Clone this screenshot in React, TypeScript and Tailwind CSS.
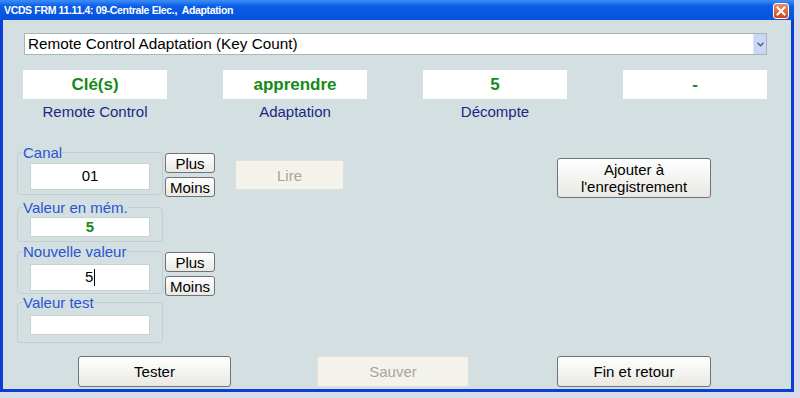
import React from "react";

const font = "font-['Liberation_Sans',Arial,sans-serif]";
const btn =
  "flex items-center justify-center border border-[#6f7277] rounded-[3px] bg-gradient-to-b from-white to-[#e9e8e2] text-[15px] text-black leading-[17px] text-center";
const dis =
  "flex items-center justify-center border border-[#e2e0d6] rounded-[2px] bg-[#f4f3eb] text-[15px] text-[#a6a59e] leading-none";
const legend = "ml-[5px] px-0 text-[15px] leading-[15px] text-[#2a55d2]";
const frame = "border border-[#c2cfd1] rounded-[4px] p-0 m-0 min-w-0";
const input =
  "ml-[12px] w-[120px] bg-white border border-[#c9d2d3] flex items-center justify-center text-[15px]";

const boxes = [
  { v: "Clé(s)", l: "Remote Control" },
  { v: "apprendre", l: "Adaptation" },
  { v: "5", l: "Décompte" },
  { v: "-", l: "" },
];

export default function App() {
  return (
    <div className={`w-[800px] h-[398px] bg-[#d9dbe9] ${font}`}>
      <div className="w-[794px] h-[392px] flex flex-col bg-[#0a3fd6]">
        {/* title bar */}
        <div className="h-[20px] flex items-center justify-between pl-[4px] pr-[5px] bg-gradient-to-b from-[#3f8ef5] via-[#0a5ee8] via-30% to-[#0650dd]">
          <span className="text-white font-bold text-[10.5px] leading-none tracking-[-0.35px] pt-[1px]">
            VCDS FRM 11.11.4: 09-Centrale Elec.,&nbsp; Adaptation
          </span>
          <div className="w-[16px] h-[16px] mt-[2px] rounded-[3px] border border-white bg-gradient-to-b from-[#ee8a68] to-[#cf4318] flex items-center justify-center">
            <svg width="10" height="10" viewBox="0 0 10 10">
              <path d="M1.5 1.5 L8.5 8.5 M8.5 1.5 L1.5 8.5" stroke="white" strokeWidth="2" strokeLinecap="square" />
            </svg>
          </div>
        </div>

        {/* body */}
        <div className="flex-1 mx-[3px] mb-[3px] bg-[#d3dfe0] flex flex-col">
          {/* dropdown */}
          <div className="mt-[13px] ml-[21px] w-[743px] h-[22px] bg-white border border-[#a9b6bc] flex items-center justify-between">
            <span className="pl-[3px] text-[15.3px] text-black leading-none">
              Remote Control Adaptation (Key Count)
            </span>
            <div className="w-[13px] h-[20px] bg-[#c9d7f3] border-l border-[#dbe4f7] flex items-center justify-center">
              <svg width="7" height="5" viewBox="0 0 7 5">
                <path d="M0.5 0.8 L3.5 3.8 L6.5 0.8" fill="none" stroke="#4a5f8c" strokeWidth="1.4" />
              </svg>
            </div>
          </div>

          {/* value boxes */}
          <div className="mt-[15px] ml-[20px] flex gap-[56px]">
            {boxes.map((b, i) => (
              <div key={i} className="w-[144px] flex flex-col items-center">
                <div className="w-[144px] h-[29px] bg-white flex items-center justify-center text-[17px] font-bold text-[#168a16]">
                  {b.v}
                </div>
                <div className="mt-[4px] h-[17px] text-[15px] leading-[17px] text-[#1c2785]">{b.l}</div>
              </div>
            ))}
          </div>

          {/* middle */}
          <div className="mt-[25px] ml-[14px] flex items-start">
            <div className="w-[146px] flex flex-col">
              <fieldset className={frame}>
                <legend className={legend}>Canal</legend>
                <div className={`${input} mt-[3px] h-[27px] text-black`}>01</div>
                <div className="h-[4px]" />
              </fieldset>
              <fieldset className={`${frame} mt-[5px]`}>
                <legend className={legend}>Valeur en mém.</legend>
                <div className={`${input} mt-[2px] h-[20px] font-bold text-[#168a16]`}>5</div>
                <div className="h-[4px]" />
              </fieldset>
              <fieldset className={`${frame} mt-[2px]`}>
                <legend className={legend}>Nouvelle valeur</legend>
                <div className={`${input} mt-[5px] h-[27px] text-black`}>
                  <span>5</span>
                  <span className="w-px h-[17px] bg-black ml-[0.5px]" />
                </div>
                <div className="h-[2px]" />
              </fieldset>
              <fieldset className={`${frame} mt-[1px]`}>
                <legend className={legend}>Valeur test</legend>
                <div className={`${input} mt-[5px] h-[20px]`} />
                <div className="h-[7px]" />
              </fieldset>
            </div>

            <div className="ml-[2px] w-[50px] flex flex-col">
              <div className={`${btn} mt-[8px] h-[20px]`}>Plus</div>
              <div className={`${btn} mt-[4px] h-[20px]`}>Moins</div>
              <div className={`${btn} mt-[55px] h-[20px]`}>Plus</div>
              <div className={`${btn} mt-[4px] h-[20px]`}>Moins</div>
            </div>

            <div className={`${dis} ml-[20px] mt-[15px] w-[109px] h-[30px]`}>Lire</div>

            <div className={`${btn} ml-[213px] mt-[13px] w-[154px] h-[40px]`}>
              Ajouter à
              <br />
              l'enregistrement
            </div>
          </div>

          {/* bottom buttons */}
          <div className="mt-[13px] ml-[75px] flex">
            <div className={`${btn} w-[153px] h-[31px]`}>Tester</div>
            <div className={`${dis} ml-[86px] w-[152px] h-[31px]`}>Sauver</div>
            <div className={`${btn} ml-[88px] w-[154px] h-[31px]`}>Fin et retour</div>
          </div>
        </div>
      </div>
    </div>
  );
}
